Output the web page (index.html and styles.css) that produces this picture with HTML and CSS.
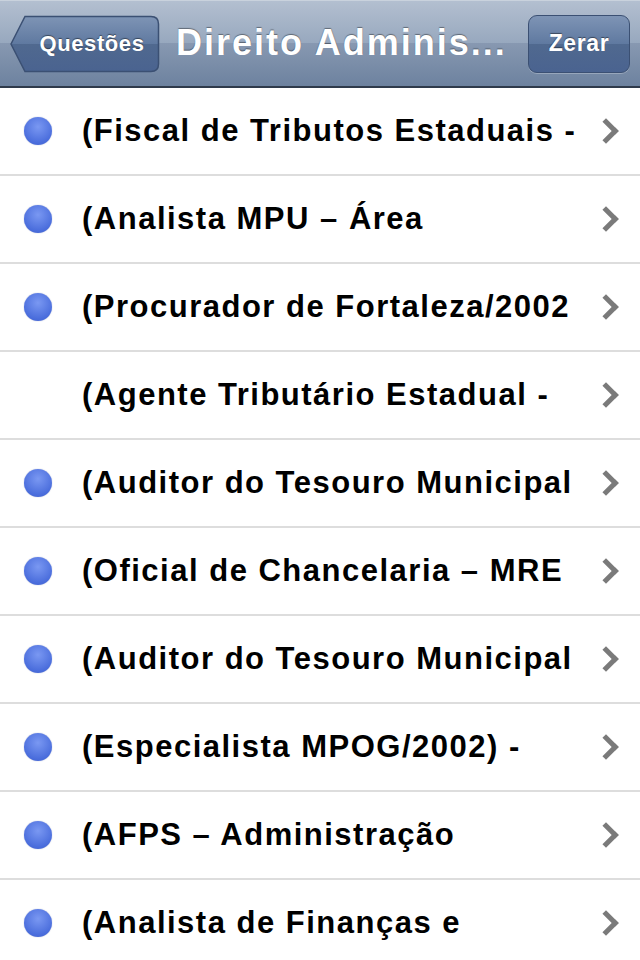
FILE: index.html
```html
<!DOCTYPE html>
<html lang="pt">
<head>
    <meta charset="UTF-8">
    <meta name="viewport" content="width=device-width, initial-scale=1.0">
    <title>Direito Administrativo</title>
    <link rel="stylesheet" href="styles.css">
</head>
<body>
    <div class="navbar">
        <button class="back-button">
            <svg class="btn-shape" viewBox="0 0 150 58" preserveAspectRatio="none">
                <defs>
                    <linearGradient id="bg1" x1="0" y1="0" x2="0" y2="1">
                        <stop offset="0" stop-color="#7e94b5"/>
                        <stop offset="0.5" stop-color="#5f79a0"/>
                        <stop offset="0.5" stop-color="#50698f"/>
                        <stop offset="1" stop-color="#4a6390"/>
                    </linearGradient>
                </defs>
                <path d="M1 29 L15 1.5 H141 Q148.5 1.5 148.5 9 V49 Q148.5 56.5 141 56.5 H15 Z" fill="url(#bg1)" stroke="#3b5073" stroke-width="1.5"/>
            </svg>
            <span>Questões</span>
        </button>
        <h1 class="title">Direito Adminis...</h1>
        <button class="nav-button">Zerar</button>
    </div>

    <ul class="list">
        <li class="row"><span class="dot"></span><span class="label">(Fiscal de Tributos Estaduais -</span><span class="chevron"></span></li>
        <li class="row"><span class="dot"></span><span class="label">(Analista MPU – Área</span><span class="chevron"></span></li>
        <li class="row"><span class="dot"></span><span class="label">(Procurador de Fortaleza/2002</span><span class="chevron"></span></li>
        <li class="row"><span class="dot empty"></span><span class="label">(Agente Tributário Estadual -</span><span class="chevron"></span></li>
        <li class="row"><span class="dot"></span><span class="label">(Auditor do Tesouro Municipal</span><span class="chevron"></span></li>
        <li class="row"><span class="dot"></span><span class="label">(Oficial de Chancelaria – MRE</span><span class="chevron"></span></li>
        <li class="row"><span class="dot"></span><span class="label">(Auditor do Tesouro Municipal</span><span class="chevron"></span></li>
        <li class="row"><span class="dot"></span><span class="label">(Especialista MPOG/2002) -</span><span class="chevron"></span></li>
        <li class="row"><span class="dot"></span><span class="label">(AFPS – Administração</span><span class="chevron"></span></li>
        <li class="row"><span class="dot"></span><span class="label">(Analista de Finanças e</span><span class="chevron"></span></li>
    </ul>
</body>
</html>
```

FILE: styles.css
```css
body {
    margin: 0;
    padding: 0;
    width: 640px;
    height: 960px;
    overflow: hidden;
    background: #ffffff;
    font-family: "Liberation Sans", Arial, sans-serif;
}

.navbar {
    display: flex;
    align-items: center;
    height: 86px;
    padding: 0 10px;
    gap: 16px;
    background: linear-gradient(#b3bfd0, #97a8be 50%, #8798b1 50%, #6d829f);
    border-top: 1px solid #c9d2dd;
    border-bottom: 2px solid #2f3a4b;
    box-sizing: border-box;
    height: 88px;
}

.back-button,
.nav-button {
    font-family: "Liberation Sans", Arial, sans-serif;
    font-weight: bold;
    font-size: 22px;
    letter-spacing: 0.6px;
    color: #ffffff;
    text-shadow: 0 -1px 1px rgba(0, 0, 0, 0.45);
    height: 58px;
    cursor: pointer;
}

.back-button {
    position: relative;
    width: 150px;
    flex-shrink: 0;
    padding: 0 0 0 14px;
    border: none;
    background: none;
}

.back-button span {
    position: relative;
}

.btn-shape {
    position: absolute;
    top: 0;
    left: 0;
    width: 100%;
    height: 100%;
}

.title {
    flex: 1;
    margin: 0 0 2px;
    font-size: 36px;
    letter-spacing: 2px;
    font-weight: bold;
    color: #ffffff;
    white-space: nowrap;
    text-shadow: 0 -1px 1px rgba(0, 0, 0, 0.4);
}

.nav-button {
    width: 102px;
    flex-shrink: 0;
    font-size: 23px;
    border: 1.5px solid #3b5073;
    border-radius: 9px;
    background: linear-gradient(#7e94b5, #5f79a0 50%, #50698f 50%, #4a6390);
    box-shadow: 0 1px 0 rgba(255, 255, 255, 0.25);
}

.list {
    list-style: none;
    margin: 0;
    padding: 0;
}

.row {
    display: flex;
    align-items: center;
    height: 86px;
    border-bottom: 2px solid #dddddd;
    padding: 0 22px 0 24px;
}

.dot {
    width: 28px;
    height: 28px;
    border-radius: 50%;
    flex-shrink: 0;
    background: radial-gradient(circle at 50% 35%, #7a98f2, #4a6ddc 70%, #3f5fc8);
    box-shadow: 0 0 1px rgba(40, 60, 140, 0.6);
}

.dot.empty {
    background: none;
    box-shadow: none;
}

.label {
    flex: 1;
    margin-left: 30px;
    font-size: 31px;
    letter-spacing: 1.5px;
    font-weight: bold;
    color: #000000;
    white-space: nowrap;
    overflow: hidden;
}

.chevron {
    width: 13px;
    height: 13px;
    border-top: 5px solid #7a7a7a;
    border-right: 5px solid #7a7a7a;
    transform: rotate(45deg);
    margin-right: 3px;
    flex-shrink: 0;
}
```
